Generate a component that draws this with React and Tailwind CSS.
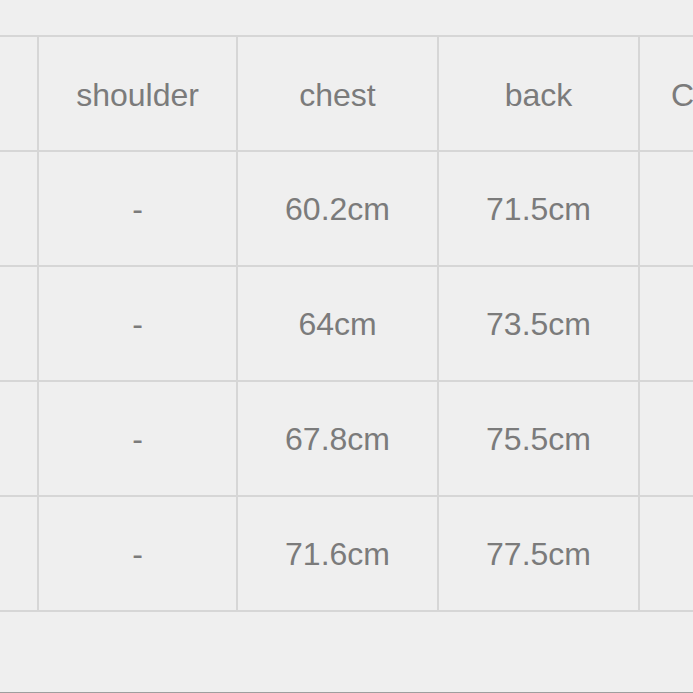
import React from 'react';

const rows = [
  { shoulder: '-', chest: '60.2cm', back: '71.5cm' },
  { shoulder: '-', chest: '64cm', back: '73.5cm' },
  { shoulder: '-', chest: '67.8cm', back: '75.5cm' },
  { shoulder: '-', chest: '71.6cm', back: '77.5cm' },
];

const cell = 'h-[115px] border-r-2 border-b-2 border-[#d6d6d6] flex items-center justify-center overflow-hidden whitespace-nowrap';

const App = () => {
  return (
    <div
      className="w-[693px] h-[693px] bg-[#efefef] overflow-hidden flex flex-col text-[32px] text-[#7b7b7b]"
      style={{ fontFamily: '"Liberation Sans", Arial, sans-serif' }}
    >
      <div className="mt-[35px] border-t-2 border-[#d6d6d6] grid grid-cols-[39px_199px_201px_201px_200px] w-[840px]">
        {/* header row */}
        <div className={cell}></div>
        <div className={`${cell} pt-[2px]`}>shoulder</div>
        <div className={`${cell} pt-[2px]`}>chest</div>
        <div className={`${cell} pt-[2px]`}>back</div>
        <div className={`${cell} !justify-start pl-[31px] pt-[2px]`}>C</div>

        {rows.map((r, i) => (
          <React.Fragment key={i}>
            <div className={cell}></div>
            <div className={`${cell} pt-[1px]`}>{r.shoulder}</div>
            <div className={`${cell} pt-[1px]`}>{r.chest}</div>
            <div className={`${cell} pt-[1px]`}>{r.back}</div>
            <div className={cell}></div>
          </React.Fragment>
        ))}
      </div>
      <div className="flex-1"></div>
      <div className="h-px bg-[#9e9e9e]"></div>
    </div>
  );
};

export default App;
